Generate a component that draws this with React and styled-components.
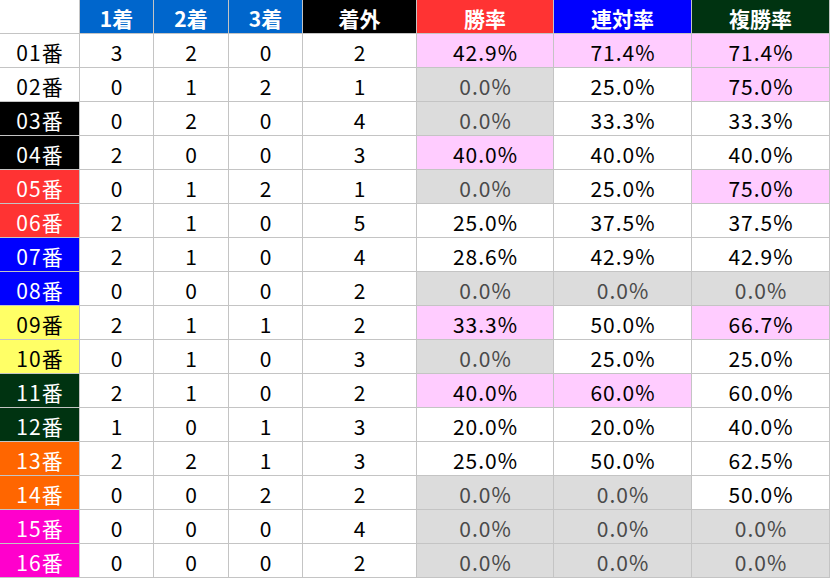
import styled, { createGlobalStyle } from "styled-components"

const Global = createGlobalStyle`
body {
  margin: 0;
  background: #fff;
  font-family: "Noto Sans CJK JP", "Noto Sans", sans-serif;
}
`

const Grid = styled.div`
display: grid;
grid-template-columns: 79px 73px 74px 73px 113px 136px 137px 137px;
grid-auto-rows: 33px;
gap: 1px;
width: 829px;
background: #c4c4c4;
border-right: 1px solid #c4c4c4;
border-bottom: 1px solid #c4c4c4;
`

const Head = styled.div`
display: flex;
align-items: center;
justify-content: center;
padding-top: 2px;
background: ${(p) => p.bg};
color: #fff;
font-size: 21px;
font-weight: bold;
`

const Label = styled.div`
display: flex;
align-items: center;
justify-content: center;
padding: 2px 0 0 1px;
background: ${(p) => p.bg};
color: ${(p) => p.fg};
font-size: 21px;
letter-spacing: 1px;
`

const Cell = styled.div`
display: flex;
align-items: center;
justify-content: center;
padding: 2px 0 0 1px;
background: ${(p) => (p.tone === "pink" ? "#ffccff" : p.tone === "gray" ? "#dcdcdc" : "#fff")};
color: ${(p) => (p.tone === "gray" ? "#4a4a4a" : "#000")};
font-size: 21px;
letter-spacing: 1px;
`

const heads = [
  ["", "#fff"],
  ["1着", "#0066cc"],
  ["2着", "#0066cc"],
  ["3着", "#0066cc"],
  ["着外", "#000"],
  ["勝率", "#ff3333"],
  ["連対率", "#0000ff"],
  ["複勝率", "#003311"],
]

const waku = [
  ["#fff", "#000"],
  ["#000", "#fff"],
  ["#ff3333", "#fff"],
  ["#0000ff", "#fff"],
  ["#ffff66", "#000"],
  ["#003311", "#fff"],
  ["#ff6600", "#fff"],
  ["#ff00cc", "#fff"],
]

// p = pink, g = gray, w = white for the three rate columns
const rows = [
  [3, 2, 0, 2, "42.9", "71.4", "71.4", "ppp"],
  [0, 1, 2, 1, "0.0", "25.0", "75.0", "gwp"],
  [0, 2, 0, 4, "0.0", "33.3", "33.3", "gww"],
  [2, 0, 0, 3, "40.0", "40.0", "40.0", "pww"],
  [0, 1, 2, 1, "0.0", "25.0", "75.0", "gwp"],
  [2, 1, 0, 5, "25.0", "37.5", "37.5", "www"],
  [2, 1, 0, 4, "28.6", "42.9", "42.9", "www"],
  [0, 0, 0, 2, "0.0", "0.0", "0.0", "ggg"],
  [2, 1, 1, 2, "33.3", "50.0", "66.7", "pwp"],
  [0, 1, 0, 3, "0.0", "25.0", "25.0", "gww"],
  [2, 1, 0, 2, "40.0", "60.0", "60.0", "ppw"],
  [1, 0, 1, 3, "20.0", "20.0", "40.0", "www"],
  [2, 2, 1, 3, "25.0", "50.0", "62.5", "www"],
  [0, 0, 2, 2, "0.0", "0.0", "50.0", "ggw"],
  [0, 0, 0, 4, "0.0", "0.0", "0.0", "ggg"],
  [0, 0, 0, 2, "0.0", "0.0", "0.0", "ggg"],
]

const toneOf = { p: "pink", g: "gray", w: "white" }

export default function App() {
  return (
    <>
      <Global />
      <Grid>
        {heads.map(([t, bg], i) => (
          <Head key={"h" + i} bg={bg}>{t}</Head>
        ))}
        {rows.map((r, i) => {
          const [bg, fg] = waku[Math.floor(i / 2)]
          const num = String(i + 1).padStart(2, "0") + "番"
          return [
            <Label key={"l" + i} bg={bg} fg={fg}>{num}</Label>,
            ...r.slice(0, 4).map((v, j) => (
              <Cell key={i + "c" + j}>{v}</Cell>
            )),
            ...r.slice(4, 7).map((v, j) => (
              <Cell key={i + "r" + j} tone={toneOf[r[7][j]]}>{v}%</Cell>
            )),
          ]
        })}
      </Grid>
    </>
  )
}
